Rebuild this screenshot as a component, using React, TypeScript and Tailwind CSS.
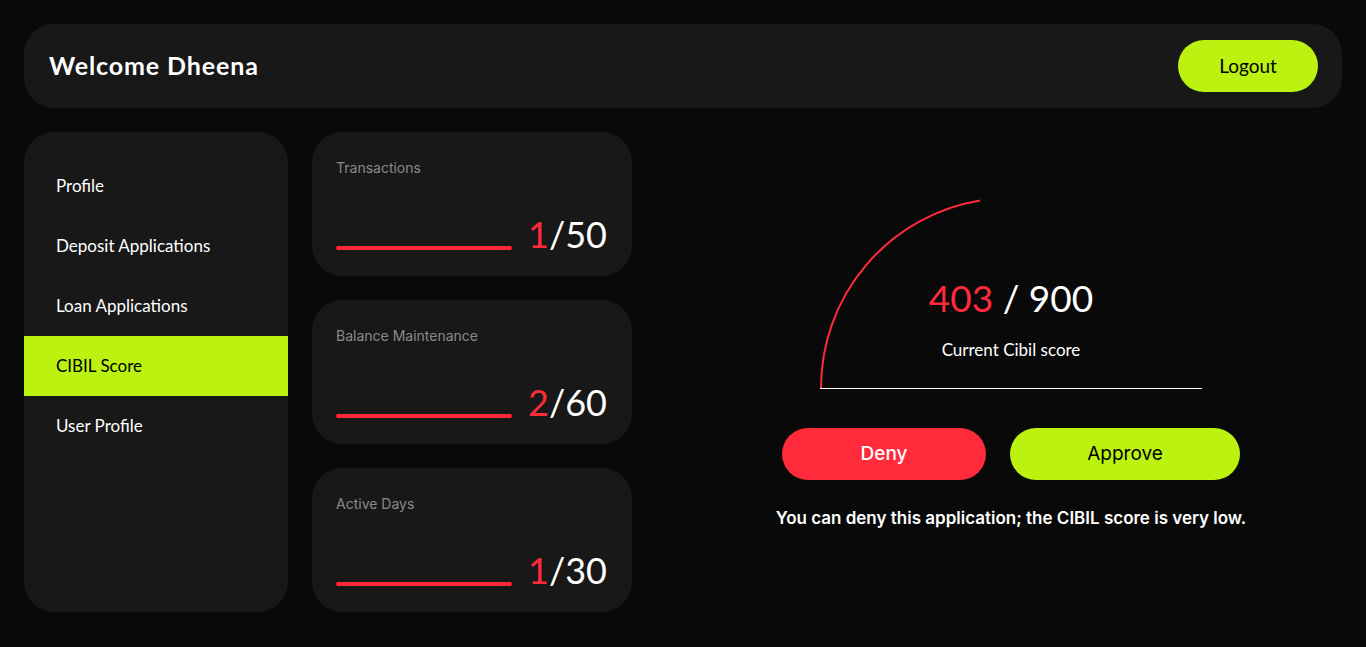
const navItems = ["Profile", "Deposit Applications", "Loan Applications", "CIBIL Score", "User Profile"];

const stats = [
  { label: "Transactions", value: 1, total: 50 },
  { label: "Balance Maintenance", value: 2, total: 60 },
  { label: "Active Days", value: 1, total: 30 },
];

function StatCard({ label, value, total }: { label: string; value: number; total: number }) {
  return (
    <div className="h-[144px] rounded-[30px] bg-[#181818] px-6 pt-[26px] pb-[24px] flex flex-col justify-between">
      <div className="text-[14px] leading-5 text-[#8a8a8a] font-['Inter',sans-serif]">{label}</div>
      <div className="flex items-end gap-4">
        <div className="flex-1 h-[4px] mb-[2px] rounded-full bg-[#ff2a3a]"></div>
        <div className="text-[36px] leading-none text-white font-['Lato',sans-serif] mr-px">
          <span className="text-[#ff2a3a]">{value}</span>/{total}
        </div>
      </div>
    </div>
  );
}

function Gauge({ score, max }: { score: number; max: number }) {
  const r = 190;
  const cx = 191;
  const cy = 191;
  const angle = Math.PI - (score / max) * Math.PI;
  const x = cx + r * Math.cos(angle);
  const y = cy - r * Math.sin(angle);
  return (
    <div className="relative w-[382px] h-[192px]">
      <svg width="382" height="192" viewBox="0 0 382 192" className="block">
        <path d={`M ${cx - r} ${cy} A ${r} ${r} 0 0 1 ${x} ${y}`} fill="none" stroke="#ff2a3a" strokeWidth="2" />
        <line x1="0" y1="191.5" x2="382" y2="191.5" stroke="#ffffff" strokeWidth="1" />
      </svg>
      <div className="absolute left-0 right-0 top-[82px] text-center">
        <div className="text-[37px] leading-none text-white font-['Lato',sans-serif]">
          <span className="text-[#ff2a3a]">{score}</span> / {max}
        </div>
        <div className="mt-[21px] text-[17px] text-white font-['Lato',sans-serif]">Current Cibil score</div>
      </div>
    </div>
  );
}

export default function App() {
  return (
    <div className="min-h-[647px] bg-[#090909] p-6 font-['Lato',sans-serif]">
      <div className="h-[84px] rounded-[30px] bg-[#181818] flex items-center justify-between pl-[25px] pr-6">
        <h1 className="text-[25px] font-bold text-white tracking-[0.9px]">Welcome Dheena</h1>
        <button className="w-[140px] h-[52px] rounded-full bg-[#bbf20f] text-[19px] text-black">Logout</button>
      </div>

      <div className="mt-6 flex gap-6">
        <div className="w-[264px] h-[480px] rounded-[30px] bg-[#181818] pt-[24px]">
          {navItems.map((item) => (
            <div
              key={item}
              className={`h-[60px] flex items-center pl-8 text-[17px] ${
                item === "CIBIL Score" ? "bg-[#bbf20f] text-black" : "text-white"
              }`}
            >
              {item}
            </div>
          ))}
        </div>

        <div className="w-[320px] flex flex-col gap-6">
          {stats.map((s) => (
            <StatCard key={s.label} {...s} />
          ))}
        </div>

        <div className="flex-1 pl-6 pt-[65px] flex flex-col items-center">
          <Gauge score={403} max={900} />
          <div className="mt-[39px] flex gap-6">
            <button className="w-[204px] h-[52px] rounded-full bg-[#ff2a3a] text-white text-[19px] font-medium font-['Inter',sans-serif]">
              Deny
            </button>
            <button className="w-[230px] h-[52px] rounded-full bg-[#bbf20f] text-black text-[19px] font-['Inter',sans-serif]">
              Approve
            </button>
          </div>
          <p className="mt-[26px] text-[17px] font-semibold text-white font-['Inter',sans-serif]">
            You can deny this application; the CIBIL score is very low.
          </p>
        </div>
      </div>
    </div>
  );
}
